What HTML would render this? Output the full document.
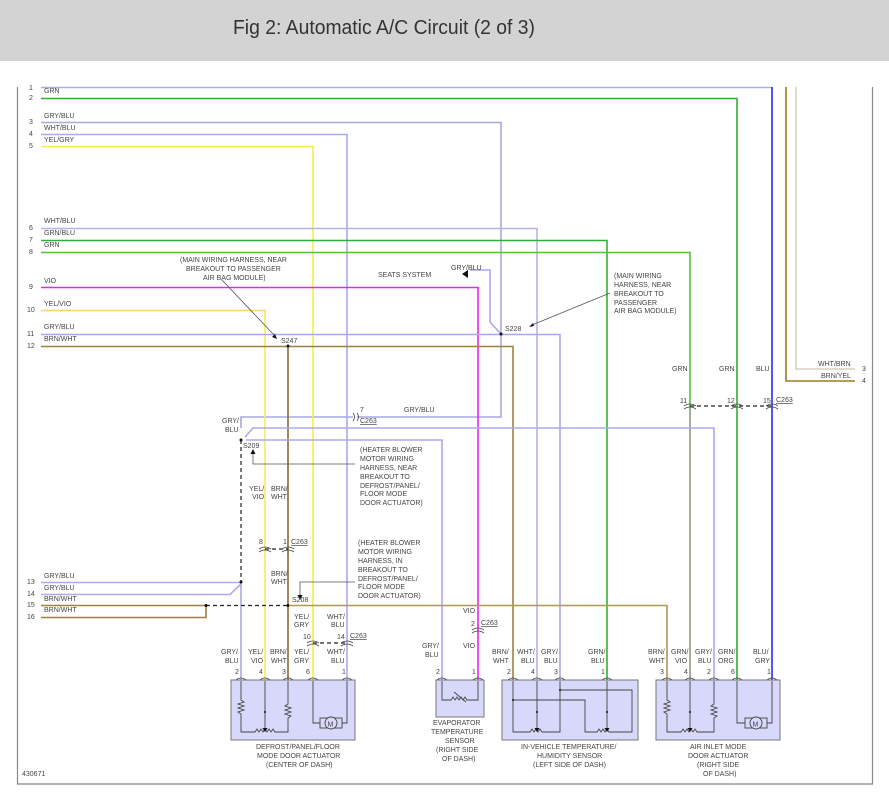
<!DOCTYPE html>
<html><head><meta charset="utf-8"><style>
html,body{margin:0;padding:0;background:#fff;}
svg{display:block}
text{font-family:"Liberation Sans",sans-serif;font-size:7px;fill:#444;}
.t{font-size:6.6px}
</style></head><body>
<svg width="889" height="807" viewBox="0 0 889 807" xmlns="http://www.w3.org/2000/svg">
<rect x="0" y="0" width="889" height="61" fill="#d3d3d3"/>
<text x="233" y="34" style="font-size:20px;fill:#333" textLength="302" lengthAdjust="spacingAndGlyphs">Fig 2: Automatic A/C Circuit (2 of 3)</text>
<!-- frame -->
<g stroke="#888" stroke-width="1.2" fill="none">
<path d="M17.5 87V784H872.5V87"/>
</g>
<g fill="none" stroke-width="1.6">
<!-- 1 -->
<path d="M41 87.5H772" stroke="#aaaaf0"/>
<path d="M772 87V680" stroke="#2a2aff"/>
<!-- 2 -->
<path d="M41 98.5H737V680" stroke="#33b033"/>
<!-- 3 -->
<path d="M41 122.5H501V417H357" stroke="#a8a8e0"/>
<path d="M353 417H241V428" stroke="#a8a8e0"/>
<!-- 4 -->
<path d="M41 134.5H347V680" stroke="#aaaaf0"/>
<!-- 5 -->
<path d="M41 146.5H313V680" stroke="#f4f040"/>
<!-- 6 -->
<path d="M41 228.5H537V680" stroke="#b4b4e8"/>
<!-- 7 -->
<path d="M41 240.5H607V680" stroke="#33b033"/>
<!-- 8 -->
<path d="M41 252.5H690V680" stroke="#55c040"/>
<path d="M690 410V680" stroke="#d070d0" stroke-width="0.8"/>
<!-- 9 -->
<path d="M41 287.5H478V680" stroke="#ee22ee"/>
<!-- 10 -->
<path d="M41 310.5H265V680" stroke="#ffd070"/>
<path d="M265 312V680" stroke="#ffff40" stroke-width="0.8"/>
<!-- 11 -->
<path d="M41 334.5H560V680" stroke="#a8a8f0"/>
<path d="M501 334L490 322V270H470" stroke="#a8a8f0"/>
<!-- 12 -->
<path d="M41 346.5H513V680" stroke="#a08040"/>
<path d="M288 346V680" stroke="#8a6a30"/>
<!-- right wires -->
<path d="M786 87V381H855" stroke="#a07a20"/>
<path d="M796 87V369H855" stroke="#d8d0c0"/>
<!-- lavender 428 -->
<path d="M245 437L253 428H714V680" stroke="#aaaaf0"/>
<path d="M246 440H442V680" stroke="#aaaaf0"/>
<!-- 13/14 -->
<path d="M41 582.5H241V680" stroke="#aaaaf0"/>
<path d="M41 594.5H230L241 584" stroke="#aaaaf0"/>
<!-- 15/16 -->
<path d="M41 605.5H206" stroke="#a08040"/>
<path d="M41 617.5H206V606" stroke="#a08040"/>
<path d="M290 605.5H667V680" stroke="#b09850"/>
</g>
<!-- dashed -->
<g stroke="#222" stroke-width="1.2" stroke-dasharray="4,3" fill="none">
<path d="M241 440V582"/>
<path d="M206 605.5H288"/>
<path d="M265 549H288"/>
<path d="M313 643H347"/>
<path d="M690 406H772"/>
</g>
<!-- dots -->
<g fill="#111">
<circle cx="501" cy="334" r="1.5"/><circle cx="288" cy="346" r="1.5"/>
<circle cx="241" cy="440" r="1.5"/><circle cx="241" cy="582" r="1.5"/>
<circle cx="206" cy="605.5" r="1.5"/><circle cx="288" cy="605.5" r="1.5"/>
</g>
<!-- connector arcs -->
<g stroke="#444" stroke-width="0.8" fill="none">
<path d="M259 549q6-4 12 0M259 552q6-4 12 0"/>
<path d="M282 549q6-4 12 0M282 552q6-4 12 0"/>
<path d="M307 643q6-4 12 0M307 646q6-4 12 0"/>
<path d="M341 643q6-4 12 0M341 646q6-4 12 0"/>
<path d="M472 630q6-4 12 0M472 633q6-4 12 0"/>
<path d="M684 406q6-4 12 0M684 409q6-4 12 0"/>
<path d="M731 406q6-4 12 0M731 409q6-4 12 0"/>
<path d="M766 406q6-4 12 0M766 409q6-4 12 0"/>
<path d="M353 413q3 4 0 8M357 413q3 4 0 8"/>
<!-- arrows/leaders -->
<path d="M222 280L275 336" stroke="#555"/>
<path d="M610 293L532 325" stroke="#555"/>
<path d="M355 464H253V452" stroke="#555"/>
<path d="M355 582H300V597" stroke="#555"/>
</g>
<g fill="#111">
<path d="M277 339l-5-2 3-3z"/><path d="M529 327l4-4 1 3z"/>
<path d="M253 449l-2.5 5h5z"/><path d="M300 600l-2.5-5h5z"/>
<path d="M462 274l6-4v8z"/>
</g>
<!-- boxes -->
<g fill="#d8d8fa" stroke="#777" stroke-width="1">
<rect x="231" y="680" width="124" height="60"/>
<rect x="436" y="680" width="48" height="37"/>
<rect x="502" y="680" width="136" height="60"/>
<rect x="656" y="680" width="124" height="60"/>
</g>
<!-- pin arcs on boxes -->
<g stroke="#444" stroke-width="0.8" fill="none">
<path d="M236 680q5-4 10 0M260 680q5-4 10 0M283 680q5-4 10 0M308 680q5-4 10 0M342 680q5-4 10 0"/>
<path d="M437 680q5-4 10 0M473 680q5-4 10 0"/>
<path d="M508 680q5-4 10 0M532 680q5-4 10 0M555 680q5-4 10 0M602 680q5-4 10 0"/>
<path d="M662 680q5-4 10 0M685 680q5-4 10 0M709 680q5-4 10 0M732 680q5-4 10 0M767 680q5-4 10 0"/>
</g>
<!-- internals -->
<g stroke="#444" stroke-width="0.9" fill="none">
<!-- box1 -->
<path d="M241 681V700l3 2-6 2 6 2-6 2 6 2-6 2 3 2V732H255l2-3 2 3 2-3 2 3 2-3 2 3 2-3 2 3 2-3 2 3H288V718l3-2-6-2 6-2-6-2 6-2-6-2 3-2V681"/>
<path d="M265 681V728"/>
<path d="M313 681V723H320M342 723H347V681"/>
<rect x="320" y="718" width="22" height="10"/><circle cx="331" cy="723" r="6" fill="#d8d8fa"/>
<!-- box2 -->
<path d="M442 681V700H451l2-3 2 3 2-3 2 3 2-3 2 3 2-3 2 3H478V681M454 692l12 10"/>
<!-- box3 -->
<path d="M513 681V732H530l2-3 2 3 2-3 2 3 2-3 2 3H560V681M513 700H585V732H597l2-3 2 3 2-3 2 3 2-3 2 3H632V690H560"/>
<path d="M537 681V728M607 681V728"/>
<!-- box4 -->
<path d="M667 681V700l3 2-6 2 6 2-6 2 6 2-6 2 3 2V732H681l2-3 2 3 2-3 2 3 2-3 2 3 2-3 2 3H714V718l3-2-6-2 6-2-6-2 6-2-6-2 3-2V681"/>
<path d="M690 681V728"/>
<path d="M737 681V723H745M767 723H772V681"/>
<rect x="745" y="718" width="22" height="10"/><circle cx="756" cy="723" r="6" fill="#d8d8fa"/>
</g>
<g fill="#111"><circle cx="265" cy="712" r="1"/><circle cx="537" cy="712" r="1"/><circle cx="607" cy="712" r="1"/><circle cx="690" cy="712" r="1"/><circle cx="513" cy="700" r="1"/><circle cx="560" cy="690" r="1"/>
<path d="M265 732l-2.5-4h5zM537 732l-2.5-4h5zM607 732l-2.5-4h5zM690 732l-2.5-4h5z"/></g>
<g style="font-size:9px"><text x="327.5" y="726.5">M</text><text x="752.5" y="726.5">M</text></g>
<!-- text labels -->
<g>
<text x="29" y="90">1</text><text x="29" y="100">2</text><text x="29" y="124">3</text><text x="29" y="136">4</text><text x="29" y="148">5</text>
<text x="29" y="230">6</text><text x="29" y="242">7</text><text x="29" y="254">8</text><text x="29" y="289">9</text>
<text x="27" y="312">10</text><text x="27" y="336">11</text><text x="27" y="348">12</text>
<text x="27" y="584">13</text><text x="27" y="596">14</text><text x="27" y="607">15</text><text x="27" y="619">16</text>
<text x="44" y="93">GRN</text><text x="44" y="118">GRY/BLU</text><text x="44" y="130">WHT/BLU</text><text x="44" y="142">YEL/GRY</text>
<text x="44" y="223">WHT/BLU</text><text x="44" y="235">GRN/BLU</text><text x="44" y="247">GRN</text><text x="44" y="283">VIO</text>
<text x="44" y="306">YEL/VIO</text><text x="44" y="329">GRY/BLU</text><text x="44" y="341">BRN/WHT</text>
<text x="44" y="578">GRY/BLU</text><text x="44" y="590">GRY/BLU</text><text x="44" y="601">BRN/WHT</text><text x="44" y="612">BRN/WHT</text>
<text x="180" y="262">(MAIN WIRING HARNESS, NEAR</text><text x="186" y="271">BREAKOUT TO PASSENGER</text><text x="203" y="280">AIR BAG MODULE)</text>
<text x="281" y="343">S247</text>
<text x="378" y="277">SEATS SYSTEM</text><text x="451" y="270">GRY/BLU</text>
<text x="505" y="331">S228</text>
<text x="614" y="278">(MAIN WIRING</text><text x="614" y="287">HARNESS, NEAR</text><text x="614" y="296">BREAKOUT TO</text><text x="614" y="305">PASSENGER</text><text x="614" y="313">AIR BAG MODULE)</text>
<text x="672" y="371">GRN</text><text x="719" y="371">GRN</text><text x="756" y="371">BLU</text>
<text x="818" y="366">WHT/BRN</text><text x="821" y="378">BRN/YEL</text><text x="862" y="371">3</text><text x="862" y="383">4</text>
<text x="680" y="403">11</text><text x="727" y="403">12</text><text x="763" y="403">15</text><text x="776" y="402" text-decoration="underline">C263</text>
<text x="360" y="412">7</text><text x="360" y="423" text-decoration="underline">C263</text><text x="404" y="412">GRY/BLU</text>
<text x="222" y="423">GRY/</text><text x="225" y="432">BLU</text>
<text x="243" y="448">S209</text>
<text x="360" y="452">(HEATER BLOWER</text><text x="360" y="461">MOTOR WIRING</text><text x="360" y="470">HARNESS, NEAR</text><text x="360" y="479">BREAKOUT TO</text><text x="360" y="488">DEFROST/PANEL/</text><text x="360" y="496">FLOOR MODE</text><text x="360" y="505">DOOR ACTUATOR)</text>
<text x="249" y="491">YEL/</text><text x="252" y="499">VIO</text><text x="271" y="491">BRN/</text><text x="271" y="499">WHT</text>
<text x="259" y="544">8</text><text x="283" y="544">1</text><text x="291" y="544" text-decoration="underline">C263</text>
<text x="358" y="545">(HEATER BLOWER</text><text x="358" y="554">MOTOR WIRING</text><text x="358" y="563">HARNESS, IN</text><text x="358" y="572">BREAKOUT TO</text><text x="358" y="581">DEFROST/PANEL/</text><text x="358" y="589">FLOOR MODE</text><text x="358" y="598">DOOR ACTUATOR)</text>
<text x="271" y="576">BRN/</text><text x="271" y="584">WHT</text>
<text x="292" y="602">S208</text>
<text x="294" y="619">YEL/</text><text x="294" y="627">GRY</text><text x="327" y="619">WHT/</text><text x="331" y="627">BLU</text>
<text x="303" y="639">10</text><text x="337" y="639">14</text><text x="350" y="638" text-decoration="underline">C263</text>
<text x="463" y="613">VIO</text><text x="471" y="626">2</text><text x="481" y="625" text-decoration="underline">C263</text>
<text x="422" y="648">GRY/</text><text x="425" y="657">BLU</text><text x="463" y="648">VIO</text>
<text x="221" y="654">GRY/</text><text x="225" y="663">BLU</text><text x="248" y="654">YEL/</text><text x="251" y="663">VIO</text>
<text x="270" y="654">BRN/</text><text x="271" y="663">WHT</text><text x="294" y="654">YEL/</text><text x="294" y="663">GRY</text>
<text x="327" y="654">WHT/</text><text x="331" y="663">BLU</text>
<text x="235" y="674">2</text><text x="259" y="674">4</text><text x="282" y="674">3</text><text x="306" y="674">6</text><text x="342" y="674">1</text>
<text x="436" y="674">2</text><text x="472" y="674">1</text>
<text x="492" y="654">BRN/</text><text x="493" y="663">WHT</text><text x="517" y="654">WHT/</text><text x="521" y="663">BLU</text>
<text x="541" y="654">GRY/</text><text x="544" y="663">BLU</text><text x="588" y="654">GRN/</text><text x="591" y="663">BLU</text>
<text x="507" y="674">2</text><text x="531" y="674">4</text><text x="554" y="674">3</text><text x="601" y="674">1</text>
<text x="648" y="654">BRN/</text><text x="649" y="663">WHT</text><text x="671" y="654">GRN/</text><text x="675" y="663">VIO</text>
<text x="695" y="654">GRY/</text><text x="698" y="663">BLU</text><text x="718" y="654">GRN/</text><text x="718" y="663">ORG</text>
<text x="753" y="654">BLU/</text><text x="755" y="663">GRY</text>
<text x="660" y="674">3</text><text x="684" y="674">4</text><text x="707" y="674">2</text><text x="731" y="674">6</text><text x="767" y="674">1</text>
<text x="256" y="749">DEFROST/PANEL/FLOOR</text><text x="257" y="758">MODE DOOR ACTUATOR</text><text x="266" y="767">(CENTER OF DASH)</text>
<text x="433" y="725">EVAPORATOR</text><text x="431" y="734">TEMPERATURE</text><text x="445" y="743">SENSOR</text><text x="436" y="752">(RIGHT SIDE</text><text x="442" y="761">OF DASH)</text>
<text x="521" y="749">IN-VEHICLE TEMPERATURE/</text><text x="537" y="758">HUMIDITY SENSOR</text><text x="533" y="767">(LEFT SIDE OF DASH)</text>
<text x="690" y="749">AIR INLET MODE</text><text x="688" y="758">DOOR ACTUATOR</text><text x="697" y="767">(RIGHT SIDE</text><text x="703" y="776">OF DASH)</text>
<text x="22" y="776">430671</text>
</g>
</svg>
</body></html>
